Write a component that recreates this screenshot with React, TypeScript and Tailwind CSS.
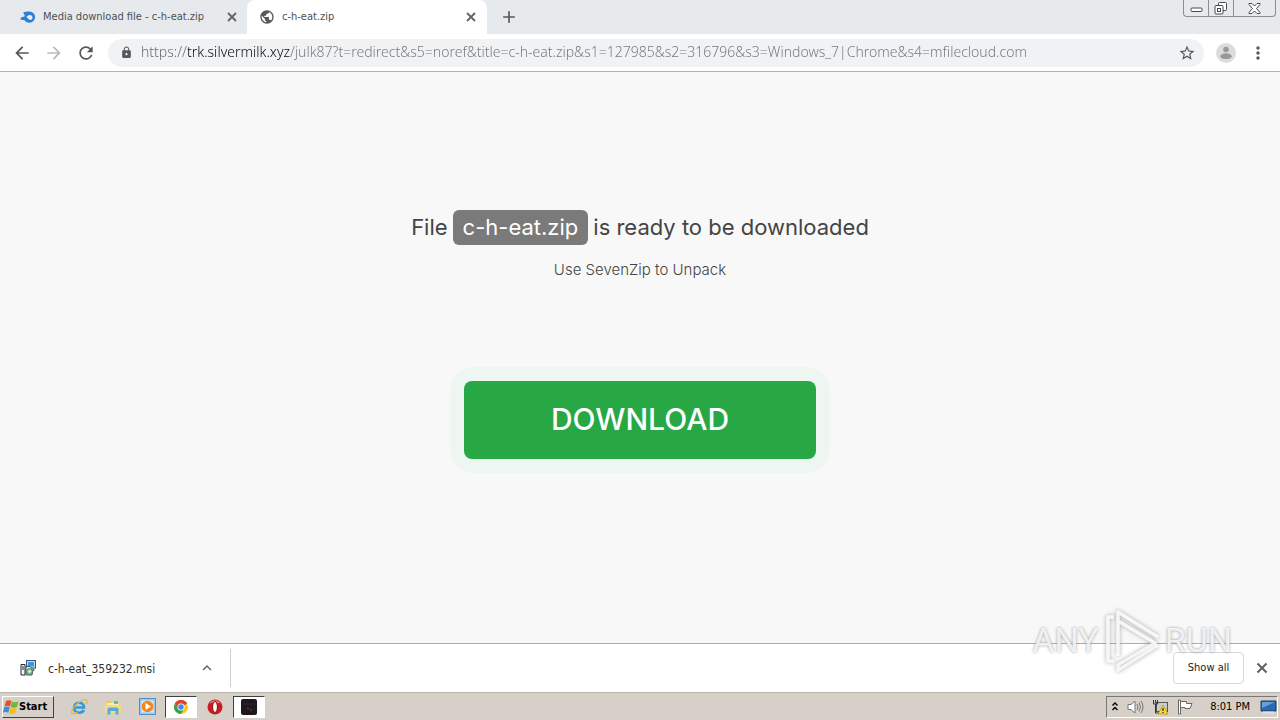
import React from 'react';
import {
    MdArrowBack,
    MdArrowForward,
    MdRefresh,
    MdLock,
    MdStarBorder,
    MdMoreVert,
    MdAdd,
    MdPublic,
    MdExpandLess,
} from 'react-icons/md';

interface TabProps {
    title: string;
    icon: React.ReactNode;
    active?: boolean;
}

function CrossIcon({ size }: { size: number }) {
    return (
        <svg width={size} height={size} viewBox="0 0 14 14" stroke="currentColor" strokeWidth="1.800">
            <path d="m3 3 8 8M11 3l-8 8" />
        </svg>
    );
}

function Tab({ title, icon, active }: TabProps) {
    return (
        <div
            className={`flex h-full items-center rounded-t-lg pl-3 ${active ? 'w-60 bg-white pr-[9px]' : 'w-[247px] pr-2 pl-5'}`}
        >
            {icon}
            <button type="button" className="ml-[7px] flex-1 text-left text-[11px] whitespace-nowrap text-[#4c4f53]">
                {title}
            </button>
            <button type="button" aria-label="Close tab" className="text-[#5f6368]">
                <CrossIcon size={14} />
            </button>
        </div>
    );
}

function MediaFireIcon() {
    return (
        <svg width="16" height="16" viewBox="0 0 16 16">
            <path d="M3 3.500C5 2.500 7 2.500 9.500 2.500a5.600 5.600 0 0 1 0 11.200C7 13.700 5.500 12.700 4.500 11.300L.5 10.500C0 8.500 1.500 8 4.500 7.500 5 5.500 4 5 3 3.500Z" fill="#2a7fd4" />
            <path d="M6.500 8.200c1-2.200 3-2.600 4.500-2 2.200 1 2 4 0 4.600-1.700.6-2-.8-4.500-2.600Z" fill="#e8ecef" />
        </svg>
    );
}

function WindowControls() {
    return (
        <div className="mr-1 flex h-[17px] rounded-b border border-t-0 border-[#8b8f94] text-[#45484c]">
            <button type="button" aria-label="Minimize" className="flex w-[25px] items-end justify-center border-r border-[#8b8f94] pb-[3px]">
                <svg width="13" height="6" viewBox="0 0 13 6">
                    <rect x="1" y="1" width="11" height="3.500" rx="1" fill="#fff" stroke="currentColor" />
                </svg>
            </button>
            <button type="button" aria-label="Restore" className="flex w-[25px] items-center justify-center border-r border-[#8b8f94]">
                <svg width="14" height="13" viewBox="0 0 14 13" fill="#fff" stroke="currentColor">
                    <rect x="4.500" y=".5" width="8" height="8" rx="1" />
                    <rect x="1" y="3.500" width="8" height="8.500" rx="1" />
                    <rect x="3.500" y="6.500" width="3" height="3" />
                </svg>
            </button>
            <button type="button" aria-label="Close" className="flex w-[41px] items-center justify-center">
                <svg width="13" height="11" viewBox="0 0 13 11">
                    <path d="M1 .5h3l2.500 2.500L9 .5h3v1L8.500 5.500 12 9.500v1H9L6.500 8 4 10.500H1v-1l3.500-4L1 1.500Z" fill="#fff" stroke="currentColor" />
                </svg>
            </button>
        </div>
    );
}

function InstallerIcon() {
    return (
        <svg width="16" height="16" viewBox="0 0 16 16">
            <rect x="6.500" y=".5" width="9" height="7.500" fill="#cfd8e4" stroke="#3d5577" />
            <rect x="8" y="2" width="6" height="4.500" fill="#2f9be8" />
            <path d="M13 8h1.500v3H13Z" fill="#8291a8" />
            <path d="M1 4.500h4V15H1Z" fill="#f1f3f4" stroke="#23292e" />
            <path d="M2 7h2M2 9h2" stroke="#23292e" />
            <path d="M6 6.500h4l3 3-1 5.500H6Z" fill="#eef0ee" stroke="#23292e" strokeWidth=".8" />
            <circle cx="9.500" cy="11.500" r="3" fill="#8fd0a4" stroke="#276b43" strokeWidth=".8" />
            <circle cx="9.500" cy="11.500" r="1" fill="#fff" />
        </svg>
    );
}

function WindowsFlag() {
    return (
        <svg width="16" height="16" viewBox="0 0 16 16">
            <path d="M3 2c2-1.200 3.500-1 5.500 0L7 7.500c-1.500-1-3.500-1-5.500 0Z" fill="#e8502c" />
            <path d="M9 2.500c2 1 4 1 6.500-.2L14 7.800c-1.700 1.200-4.300 1.200-6.300.2Z" fill="#71b636" />
            <path d="M1.300 8.300c2-1.200 3.700-1 5.500 0l-1.500 5.500c-1.500-1-3.500-1-5.300 0Z" fill="#3e8ed8" />
            <path d="M7.500 8.800c2 1 4 1 6.300-.2l-1.500 5.500c-1.700 1.200-4.300 1.200-6.300.2Z" fill="#f5bd22" />
        </svg>
    );
}

function ExplorerIcon() {
    return (
        <svg width="18" height="18" viewBox="0 0 18 18" fill="none">
            <path d="M14 12c-2.500 4-9.500 3.500-10-2C3.500 3.500 14 2.500 14 9.500H5" stroke="#2b9bdd" strokeWidth="2.500" />
            <path d="M2 15.500C0 11 12-.5 16.500 2c1 .8.500 2.500-.5 4" stroke="#e5b83c" strokeWidth="1.300" />
            <path d="M2 15.500c1.500 1.200 4-.3 5.500-1.500" stroke="#e5b83c" strokeWidth="1.300" />
        </svg>
    );
}

function FolderIcon() {
    return (
        <svg width="18" height="18" viewBox="0 0 18 18">
            <path d="M2 3h5l1 2h8v10H2Z" fill="#e9c95e" />
            <path d="M3 5h12v4H3Z" fill="#f9edb0" />
            <path d="M10 3h4v3h-4Z" fill="#76bd6a" />
            <path d="M1 7h16v8H1Z" fill="#f5dc82" />
            <path d="M3.500 16.500V11q0-1.500 1.500-1.500h8q1.500 0 1.500 1.500v5.500h-3V13h-5v3.500Z" fill="#59a9dc" />
        </svg>
    );
}

function PlayerIcon() {
    return (
        <svg width="17" height="17" viewBox="0 0 17 17">
            <rect x=".5" y=".5" width="16" height="16" fill="#9cc9ec" stroke="#4d91c8" />
            <rect x="2.500" y="2.500" width="12" height="12" fill="#d8e8f3" />
            <circle cx="8.500" cy="8.500" r="5.800" fill="#f2871c" />
            <path d="M6.500 5v7l5.500-3.500Z" fill="#fff" />
        </svg>
    );
}

function ChromeIcon() {
    return (
        <svg width="14" height="14" viewBox="0 0 14 14">
            <circle cx="7" cy="7" r="7" fill="#f7c927" />
            <path d="M7 7 .94 3.500A7 7 0 0 1 13.060 3.500Z" fill="#df4332" />
            <path d="M7 3.500h6.060A7 7 0 0 0 .94 3.500L4 9Z" fill="#df4332" />
            <path d="M.94 3.500A7 7 0 0 0 7 14l3-5.200L7 10.500 4 8.700Z" fill="#30a353" />
            <circle cx="7" cy="7" r="3.500" fill="#fff" />
            <circle cx="7" cy="7" r="2.700" fill="#4285f4" />
        </svg>
    );
}

function OperaIcon() {
    return (
        <svg width="16" height="16" viewBox="0 0 16 16">
            <circle cx="8" cy="8" r="7.500" fill="#c51d22" />
            <path d="M2.500 4.500a6.300 6.300 0 0 1 11 0c-3-1-8-1-11 0Z" fill="#e06d6c" />
            <ellipse cx="8" cy="8" rx="2.400" ry="5.500" fill="#fff" stroke="#8f0d12" />
        </svg>
    );
}

function TerminalIcon() {
    return (
        <svg width="16" height="16" viewBox="0 0 16 16">
            <rect width="16" height="16" rx="2" fill="#1c191d" />
            <path d="M1 5h14" stroke="#2c282d" />
            <path d="m6 9 2 1M9 11h2" stroke="#a62a3e" />
        </svg>
    );
}

function TrayIcons() {
    return (
        <div className="flex items-center gap-2">
            <svg width="8" height="12" viewBox="0 0 8 12" fill="none" stroke="#000" strokeWidth="1.400">
                <path d="m1.500 4.500 2.500-2.500 2.500 2.500M1.500 9 4 6.500 6.500 9" />
            </svg>
            <svg width="17" height="16" viewBox="0 0 17 16" fill="none" stroke="#777">
                <path d="M1 5.500h3L8 2v12l-4-3.500H1Z" fill="#fff" />
                <path d="M10 5q2 3 0 6M12 3.500q3 4.500 0 9M14 2q4 6 0 12" stroke="#777" />
            </svg>
            <svg width="17" height="16" viewBox="0 0 17 16">
                <rect x="4.500" y="3.500" width="11" height="9" fill="#c8cdd0" stroke="#555" />
                <path d="M1.500 1v4h4V1M3.500 1v3M3.500 5v9h4" fill="none" stroke="#333" />
                <path d="m11 6 5 9H6Z" fill="#ffd91e" stroke="#b69000" strokeWidth=".7" />
                <path d="M11 9v3M11 13v1" stroke="#222" strokeWidth="1.200" />
            </svg>
            <svg width="17" height="16" viewBox="0 0 17 16" fill="#fff" stroke="#666">
                <path d="M1.500 1h2v14h-2Z" />
                <path d="M3.500 2.500h6v2h5.500l-2 5H8v-1H3.500Z" />
            </svg>
        </div>
    );
}

// Product logo laid over the lower right corner of the session
function Watermark() {
    return (
        <div className="pointer-events-none absolute right-12 bottom-12 flex items-center gap-1 font-['Roboto',sans-serif] text-[34px] leading-none text-white/80 [text-shadow:0_0_3px_#999]">
            <span>ANY</span>
            <svg width="58" height="64" viewBox="0 0 58 64" fill="none" className="drop-shadow-[0_0_2px_#999]" strokeLinejoin="round">
                <path d="M11 9H5v44h6M15 48V4l40 25M15 48V13l37 22-37 22v5l40-25" stroke="#fff" strokeOpacity=".85" strokeWidth="3.500" />
            </svg>
            <span>RUN</span>
        </div>
    );
}

export default function App() {
    return (
        <div className="relative flex min-h-screen flex-col bg-[#f8f8f8] font-['DejaVu_Sans_Condensed','DejaVu_Sans',sans-serif]">
            {/* Tab strip */}
            <header className="flex h-[34px] items-start bg-[#e7eaed]">
                <Tab title="Media download file - c-h-eat.zip" icon={<MediaFireIcon />} />
                <Tab title="c-h-eat.zip" icon={<MdPublic size={16} color="#54585c" />} active />
                <button type="button" aria-label="New tab" className="ml-3 self-center text-[#54585c]">
                    <MdAdd size={20} />
                </button>
                <div className="flex-1" />
                <WindowControls />
            </header>

            {/* Toolbar */}
            <nav className="flex h-[38px] items-center border-b border-[#b1b3b3] bg-white px-3 text-[#54585c]">
                <div className="flex gap-3">
                    <button type="button" aria-label="Back"><MdArrowBack size={20} /></button>
                    <button type="button" aria-label="Forward" className="text-[#b8babc]"><MdArrowForward size={20} /></button>
                    <button type="button" aria-label="Reload"><MdRefresh size={20} /></button>
                </div>
                <div className="ml-3 flex h-7 flex-1 items-center rounded-full bg-[#f0f2f4] pr-2 pl-3">
                    <MdLock size={13} />
                    <input
                        type="text"
                        aria-label="Address"
                        defaultValue="https://trk.silvermilk.xyz/julk87?t=redirect&s5=noref&title=c-h-eat.zip&s1=127985&s2=316796&s3=Windows_7|Chrome&s4=mfilecloud.com"
                        className="ml-2 flex-1 bg-[linear-gradient(90deg,#63676b_47px,#08090b_47px,#08090b_149px,#72767a_149px)] bg-clip-text pb-0.5 font-['Noto_Sans',sans-serif] text-[14px] font-light text-transparent outline-none"
                    />
                    <button type="button" aria-label="Bookmark"><MdStarBorder size={18} /></button>
                </div>
                <button type="button" aria-label="Profile" className="ml-3 size-5 text-[#97999b]">
                    <svg width="20" height="20" viewBox="0 0 20 20" fill="currentColor">
                        <circle cx="10" cy="10" r="10" fill="#dcdcdc" />
                        <circle cx="10" cy="6.500" r="2.800" />
                        <ellipse cx="10" cy="13.200" rx="5.800" ry="2.900" />
                    </svg>
                </button>
                <button type="button" aria-label="Menu" className="ml-3"><MdMoreVert size={20} /></button>
            </nav>

            {/* Page */}
            <main className="flex flex-1 flex-col items-center pt-[138px] font-['Inter',sans-serif] text-[#444]">
                <h1 className="flex h-[35px] items-center gap-[5px] text-[22px]">
                    File
                    <span className="flex h-full items-center rounded-md bg-[#7a7a7a] px-[10px] text-white">c-h-eat.zip</span>
                    is ready to be downloaded
                </h1>
                <p className="mt-[15px] text-[15px] leading-5 font-light">Use SevenZip to Unpack</p>
                <div className="mt-[87px] rounded-3xl bg-[#eef6f1] p-[14px]">
                    <button type="button" className="h-[78px] w-[352px] rounded-lg bg-[#28a745] pb-0.5 text-[30px] font-medium text-white">
                        DOWNLOAD
                    </button>
                </div>
            </main>

            {/* Downloads */}
            <section className="flex h-[49px] items-center border-t border-[#aaabab] bg-white pr-[10px]">
                <div className="flex h-[38px] w-[231px] items-center border-r border-[#cfcfcf] pr-[14px] pl-5">
                    <InstallerIcon />
                    <button type="button" className="ml-3 flex-1 pt-0.5 text-left text-xs text-[#333]">c-h-eat_359232.msi</button>
                    <button type="button" aria-label="Download options" className="text-[#5f6368]">
                        <MdExpandLess size={18} />
                    </button>
                </div>
                <div className="flex-1" />
                <button type="button" className="h-8 w-[71px] rounded border border-[#d5d7da] text-[11px] text-[#222]">Show all</button>
                <button type="button" aria-label="Close downloads" className="ml-[10px] text-[#5f6368]">
                    <CrossIcon size={16} />
                </button>
            </section>

            {/* Taskbar */}
            <footer className="flex h-7 items-center border-t border-[#b8b4ac] bg-[#d6d0c8]">
                <button type="button" className="ml-0.5 flex h-[22px] w-[52px] items-center border border-t-white border-r-[#404040] border-b-[#404040] border-l-white text-[11px] font-bold text-black">
                    <WindowsFlag />
                    <span className="pt-0.5">Start</span>
                </button>
                <div className="ml-[10px] flex items-center">
                    <button type="button" aria-label="Internet Explorer" className="flex w-[30px] justify-center"><ExplorerIcon /></button>
                    <button type="button" aria-label="Windows Explorer" className="flex w-[38px] justify-center"><FolderIcon /></button>
                    <button type="button" aria-label="Media Player" className="flex w-[30px] justify-center"><PlayerIcon /></button>
                    <button type="button" aria-label="Chrome" className="ml-[3px] flex h-[22px] w-8 items-center justify-center border border-t-[#404040] border-r-white border-b-white border-l-[#404040] bg-white"><ChromeIcon /></button>
                    <button type="button" aria-label="Opera" className="flex w-9 justify-center"><OperaIcon /></button>
                    <button type="button" aria-label="Terminal" className="flex h-[22px] w-8 items-center justify-center border border-t-[#404040] border-r-white border-b-white border-l-[#404040] bg-white"><TerminalIcon /></button>
                </div>
                <div className="flex-1" />
                <div className="mr-0.5 flex h-[22px] items-center border border-t-[#777] border-r-white border-b-white border-l-[#777] pl-1 text-[11px] text-black">
                    <TrayIcons />
                    <time className="ml-4 pt-0.5">8:01 PM</time>
                    <button type="button" aria-label="Show desktop" className="ml-[10px]">
                        <svg width="17" height="14" viewBox="0 0 17 14">
                            <path d="M1 1h15v10H1Z" fill="#2869b5" stroke="#183c69" />
                            <path d="M2 2h13L2 8Z" fill="#65a0d9" />
                            <path d="M3 12.500h11" stroke="#dce5ed" strokeWidth="2" />
                        </svg>
                    </button>
                </div>
            </footer>

            <Watermark />
        </div>
    );
}
